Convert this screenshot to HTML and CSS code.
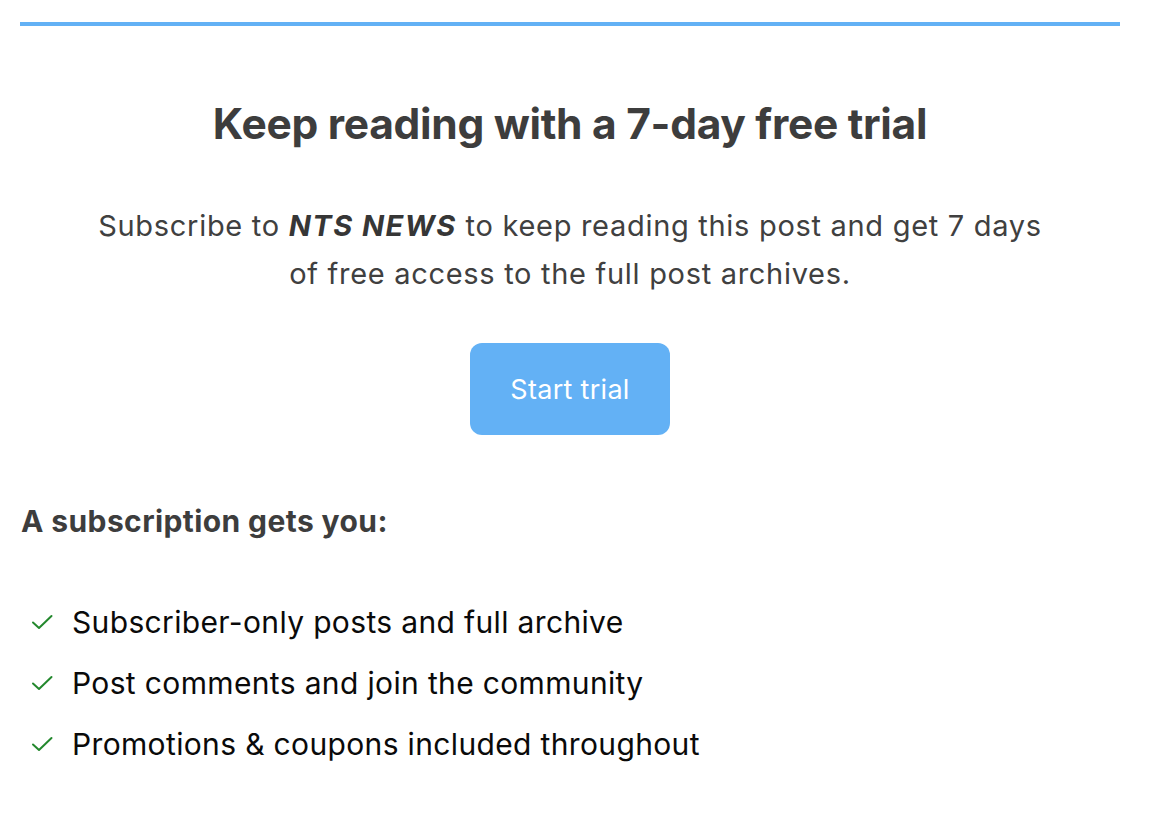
FILE: index.html
```html
<!DOCTYPE html>
<html>
<head>
<meta charset="utf-8">
<link rel="stylesheet" href="styles.css">
</head>
<body>
<div class="paywall">
  <h2 class="title">Keep reading with a 7-day free trial</h2>
  <p class="lead">Subscribe to <em>NTS NEWS</em> to keep reading this post and get 7 days of free access to the full post archives.</p>
  <div class="cta"><button class="btn">Start trial</button></div>
  <h3 class="perks-title">A subscription gets you:</h3>
  <ul class="perks">
    <li class="perk"><svg class="check" viewBox="0 0 22 20" width="22" height="20"><path d="M2 10.5l6 5.5L20.5 4" fill="none" stroke="#23882d" stroke-width="2" stroke-linecap="round" stroke-linejoin="round"/></svg><span>Subscriber-only posts and full archive</span></li>
    <li class="perk"><svg class="check" viewBox="0 0 22 20" width="22" height="20"><path d="M2 10.5l6 5.5L20.5 4" fill="none" stroke="#23882d" stroke-width="2" stroke-linecap="round" stroke-linejoin="round"/></svg><span>Post comments and join the community</span></li>
    <li class="perk"><svg class="check" viewBox="0 0 22 20" width="22" height="20"><path d="M2 10.5l6 5.5L20.5 4" fill="none" stroke="#23882d" stroke-width="2" stroke-linecap="round" stroke-linejoin="round"/></svg><span>Promotions &amp; coupons included throughout</span></li>
  </ul>
</div>
</body>
</html>
```
FILE: styles.css
```css
html, body {
  margin: 0;
  padding: 0;
  background: #ffffff;
}
body {
  font-family: Inter, "Noto Sans", "Liberation Sans", sans-serif;
  padding: 22px 39px 0 20px;
}
.paywall {
  border-top: 4px solid #63b1f5;
}
.title {
  margin: 70px 0 0;
  text-align: center;
  font-size: 42.5px;
  font-weight: 700;
  color: #3d3d3d;
  letter-spacing: -0.3px;
  line-height: 56px;
}
.lead {
  margin: 50px auto 0;
  max-width: 960px;
  text-align: center;
  font-size: 29px;
  letter-spacing: 0.7px;
  line-height: 48px;
  color: #404040;
}
.lead em {
  font-weight: 700;
  font-style: italic;
  letter-spacing: 1.5px;
  color: #363636;
}
.cta {
  display: flex;
  justify-content: center;
  margin-top: 45px;
}
.btn {
  width: 200px;
  height: 92px;
  border: none;
  border-radius: 12px;
  background: #63b1f5;
  color: #ffffff;
  font-family: inherit;
  font-size: 27px;
  letter-spacing: 0.3px;
}
.perks-title {
  margin: 66px 0 0 1px;
  font-size: 30px;
  letter-spacing: 0.4px;
  font-weight: 700;
  color: #3d3d3d;
  line-height: 40px;
}
.perks {
  list-style: none;
  margin: 50px 0 0;
  padding: 0;
}
.perk {
  display: flex;
  align-items: center;
  height: 61px;
  font-size: 30px;
  letter-spacing: 0.35px;
  color: #0a0a0a;
}
.check {
  margin: 0 19px 0 11px;
  flex: none;
}
```
